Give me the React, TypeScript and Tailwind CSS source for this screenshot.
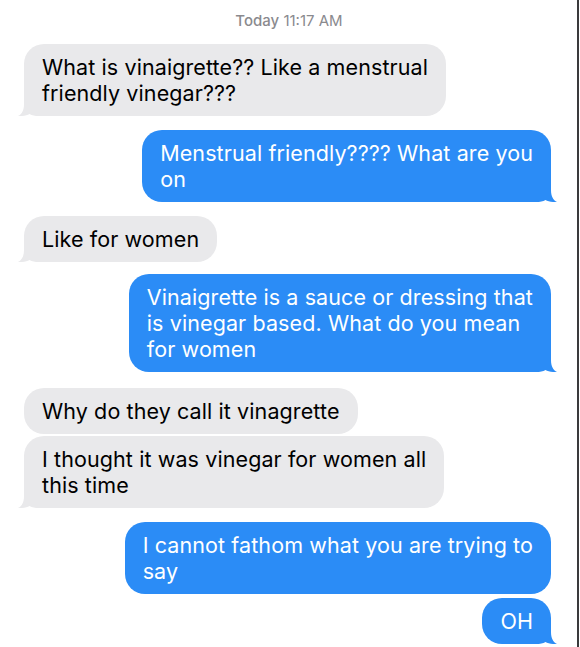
import React from "react";

const BLUE = "#2b8cf6";
const GRAY = "#e9e9eb";

function Tail({ side, color }: { side: "left" | "right"; color: string }) {
  const cls =
    side === "right"
      ? "absolute bottom-0 right-[-6px]"
      : "absolute bottom-0 left-[-6px] -scale-x-100";
  return (
    <svg className={cls} width="26" height="20" viewBox="0 0 26 20">
      <path
        d="M0,0 H20 V8 C20,14 22,18 26,20 C21,20.3 17,19.5 14.5,18 C12,19.4 9,20 5,20 H0 Z"
        fill={color}
      />
    </svg>
  );
}

function Bubble({
  side,
  tail,
  children,
}: {
  side: "left" | "right";
  tail?: boolean;
  children: React.ReactNode;
}) {
  const isRight = side === "right";
  return (
    <div className={isRight ? "flex justify-end" : "flex justify-start"}>
      <div
        className={
          "relative rounded-[20px] pl-[18px] pr-[18px] py-[10px] text-[21.5px] leading-[26px] tracking-[0.1px] whitespace-nowrap " +
          (isRight ? "bg-[#2b8cf6] text-white" : "bg-[#e9e9eb] text-black")
        }
      >
        {tail && <Tail side={side} color={isRight ? BLUE : GRAY} />}
        <span className="relative">{children}</span>
      </div>
    </div>
  );
}

export default function App() {
  return (
    <div
      className="w-[580px] h-[647px] bg-white overflow-hidden flex"
      style={{ fontFamily: "Inter, 'Liberation Sans', sans-serif" }}
    >
      <div className="flex-1 flex flex-col pl-[24px] pr-[26px] pt-[12px]">
        <div className="text-center text-[15px] leading-[18px] text-[#8a8a8e] mb-[14px] pl-[3px]">
          <span className="font-medium">Today</span> 11:17 AM
        </div>
        <Bubble side="left" tail>
          What is vinaigrette?? Like a menstrual
          <br />
          friendly vinegar???
        </Bubble>
        <div className="h-[14px]" />
        <Bubble side="right" tail>
          Menstrual friendly???? What are you
          <br />
          on
        </Bubble>
        <div className="h-[14px]" />
        <Bubble side="left" tail>
          Like for women
        </Bubble>
        <div className="h-[12px]" />
        <Bubble side="right" tail>
          Vinaigrette is a sauce or dressing that
          <br />
          is vinegar based. What do you mean
          <br />
          for women
        </Bubble>
        <div className="h-[16px]" />
        <Bubble side="left">Why do they call it vinagrette</Bubble>
        <div className="h-[2px]" />
        <Bubble side="left" tail>
          I thought it was vinegar for women all
          <br />
          this time
        </Bubble>
        <div className="h-[14px]" />
        <Bubble side="right">
          I cannot fathom what you are trying to
          <br />
          say
        </Bubble>
        <div className="h-[4px]" />
        <Bubble side="right" tail>
          OH
        </Bubble>
      </div>
      <div className="w-[2px] h-full bg-[#3a3a3c]" />
      <div className="w-[1px] h-full bg-white" />
    </div>
  );
}
